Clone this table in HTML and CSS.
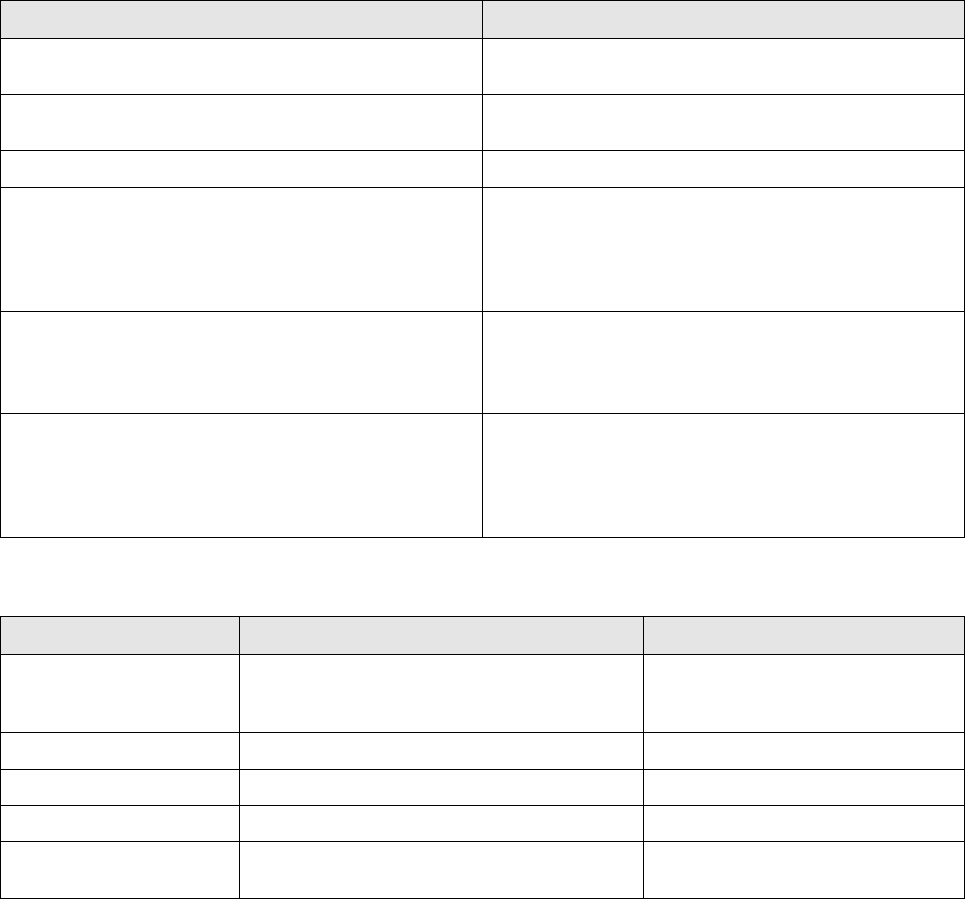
FILE: index.html
```html
<!DOCTYPE html>
<html>
<head>
<meta charset="utf-8">
<link rel="stylesheet" href="styles.css">
</head>
<body>
<table class="grid grid-two">
  <colgroup><col class="c-half"><col></colgroup>
  <thead>
    <tr class="h38"><th></th><th></th></tr>
  </thead>
  <tbody>
    <tr class="h56"><td></td><td></td></tr>
    <tr class="h56"><td></td><td></td></tr>
    <tr class="h37"><td></td><td></td></tr>
    <tr class="h124"><td></td><td></td></tr>
    <tr class="h102"><td></td><td></td></tr>
    <tr class="h124"><td></td><td></td></tr>
  </tbody>
</table>
<table class="grid grid-three">
  <colgroup><col class="c-first"><col class="c-mid"><col></colgroup>
  <thead>
    <tr class="h38"><th></th><th></th><th></th></tr>
  </thead>
  <tbody>
    <tr class="h78"><td></td><td></td><td></td></tr>
    <tr class="h37"><td></td><td></td><td></td></tr>
    <tr class="h36"><td></td><td></td><td></td></tr>
    <tr class="h36"><td></td><td></td><td></td></tr>
    <tr class="h57"><td></td><td></td><td></td></tr>
  </tbody>
</table>
</body>
</html>
```
FILE: styles.css
```css
html, body {
  margin: 0;
  padding: 0;
  background: #ffffff;
  font-family: "Liberation Sans", Arial, sans-serif;
}
.grid {
  border-collapse: collapse;
  table-layout: fixed;
  width: 965px;
}
.grid th, .grid td {
  border: 1px solid #000000;
  padding: 0;
}
.grid th {
  background: #e5e5e5;
}
.grid-three {
  margin-top: 78px;
}
.c-half { width: 482px; }
.c-first { width: 239px; }
.c-mid { width: 404px; }
.h36 { height: 36px; }
.h37 { height: 37px; }
.h38 { height: 38px; }
.h56 { height: 56px; }
.h57 { height: 57px; }
.h78 { height: 78px; }
.h102 { height: 102px; }
.h124 { height: 124px; }
```
